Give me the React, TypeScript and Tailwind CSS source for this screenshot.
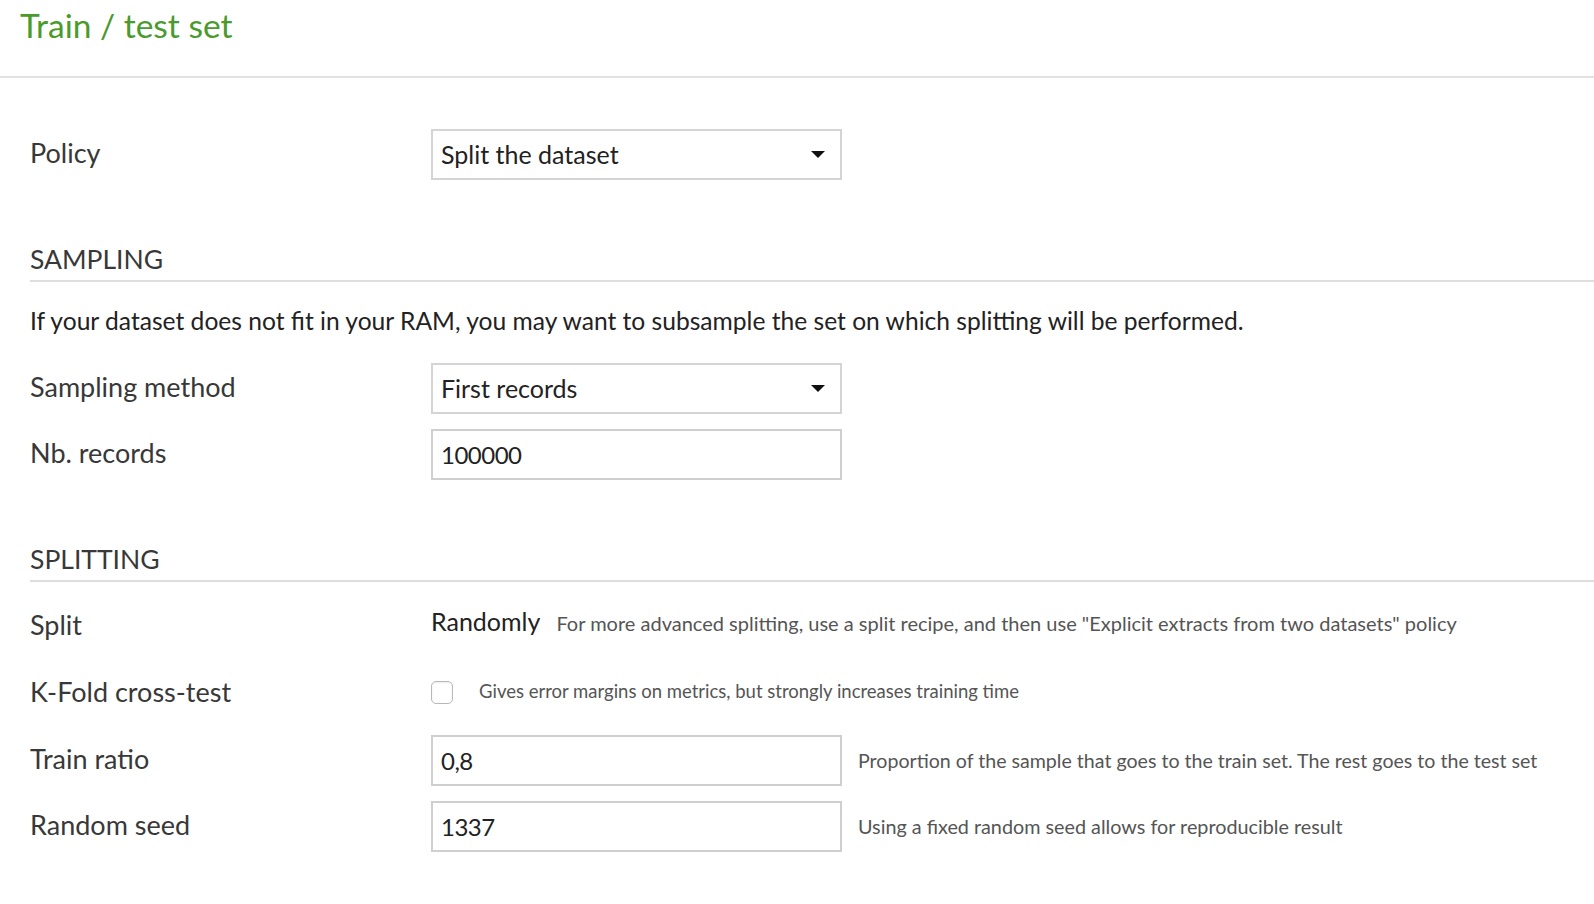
import React from "react";

const font = { fontFamily: "Lato, 'Open Sans', sans-serif" };

function Select({ value }: { value: string }) {
  return (
    <div className="flex h-[51px] w-[411px] items-center justify-between border-2 border-[#d4d4d4] bg-white pl-[8px] pr-[14px] text-[25px] text-[#222]">
      <span>{value}</span>
      <svg width="16" height="9" viewBox="0 0 16 9">
        <path d="M1 1h14L8 8z" fill="#111" />
      </svg>
    </div>
  );
}

function Input({ value }: { value: string }) {
  return (
    <div className="flex h-[51px] w-[411px] items-center border-2 border-[#cfcfcf] bg-white pl-[8px] text-[24px] tracking-[-0.5px] text-[#222]">
      {value}
    </div>
  );
}

function Label({ children }: { children: React.ReactNode }) {
  return <div className="w-[401px] shrink-0 pb-[3px] text-[27px] text-[#383838]">{children}</div>;
}

function Heading({ children }: { children: React.ReactNode }) {
  return (
    <div className="border-b-2 border-[#dedede] pb-[3px] text-[26.5px] leading-[36px] text-[#383838]">
      {children}
    </div>
  );
}

export default function App() {
  return (
    <div className="min-h-[904px] w-full bg-white" style={font}>
      {/* header */}
      <div className="h-[78px] border-b-2 border-[#e2e2e2] px-[20px] pt-[3px]">
        <h1 className="text-[33.5px] leading-[44px] text-[#4a9a2c]">Train / test set</h1>
      </div>

      <div className="pl-[30px]">
        <div className="mt-[51px] flex items-center">
          <Label>Policy</Label>
          <Select value="Split the dataset" />
        </div>

        <div className="mt-[61px]">
          <Heading>SAMPLING</Heading>
        </div>
        <p className="mt-[21px] text-[24.6px] leading-[36px] text-[#222]">
          If your dataset does not fit in your RAM, you may want to subsample the set on which splitting will be performed.
        </p>

        <div className="mt-[24px] flex items-center">
          <Label>Sampling method</Label>
          <Select value="First records" />
        </div>
        <div className="mt-[15px] flex items-center">
          <Label>Nb. records</Label>
          <Input value="100000" />
        </div>

        <div className="mt-[61px]">
          <Heading>SPLITTING</Heading>
        </div>

        {/* split: value sits a little higher than its label */}
        <div className="mt-[18px] flex h-[44px] items-center pt-[10px]">
          <Label>Split</Label>
          <div className="mb-[10px] flex items-baseline">
            <span className="text-[25px] text-[#222]">Randomly</span>
            <span className="ml-[16px] text-[20px] text-[#555]">
              For more advanced splitting, use a split recipe, and then use "Explicit extracts from two datasets" policy
            </span>
          </div>
        </div>

        <div className="mt-[28px] flex h-[44px] items-center">
          <Label>K-Fold cross-test</Label>
          <div className="mb-[4px] flex items-center">
            <div className="h-[23px] w-[22px] rounded-[5px] border border-[#b8b8b8] bg-white shadow-[inset_0_1px_2px_rgba(0,0,0,0.08)]" />
            <span className="ml-[26px] text-[18.5px] text-[#555]">
              Gives error margins on metrics, but strongly increases training time
            </span>
          </div>
        </div>

        <div className="mt-[19px] flex items-center">
          <Label>Train ratio</Label>
          <Input value="0,8" />
          <span className="ml-[16px] text-[19.6px] text-[#555]">
            Proportion of the sample that goes to the train set. The rest goes to the test set
          </span>
        </div>

        <div className="mt-[15px] flex items-center">
          <Label>Random seed</Label>
          <Input value="1337" />
          <span className="ml-[16px] text-[19.8px] text-[#555]">Using a fixed random seed allows for reproducible result</span>
        </div>
      </div>
    </div>
  );
}
